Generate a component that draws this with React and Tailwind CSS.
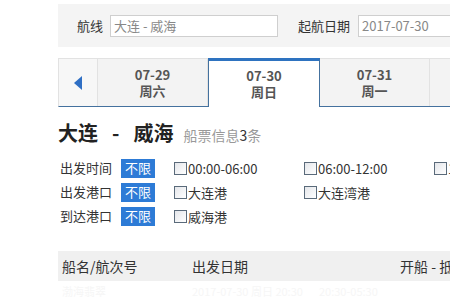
import React from "react";

const font = { fontFamily: '"Noto Sans CJK SC", "Liberation Sans", sans-serif' };

function Check({ label }) {
  return (
    <div className="flex items-center">
      <span className="w-[13px] h-[13px] border border-[#5a6a7a] bg-gradient-to-br from-[#e4e6ea] to-white"></span>
      <span className="ml-[1px] text-[13px] text-[#333] leading-none">{label}</span>
    </div>
  );
}

function FilterRow({ label, items }) {
  return (
    <div className="flex items-center h-[24px]">
      <span className="w-[63px] pl-[2px] text-[13px] text-[#333]">{label}</span>
      <span className="w-[34px] h-[19px] bg-[#2d7bd6] text-white text-[13px] flex items-center justify-center">不限</span>
      <div className="ml-[19px] flex">
        {items.map((it, i) => (
          <div key={i} className="w-[130px]">
            <Check label={it} />
          </div>
        ))}
      </div>
    </div>
  );
}

export default function App() {
  const tabs = [
    { d: "07-29", w: "周六" },
    { d: "07-30", w: "周日", active: true },
    { d: "07-31", w: "周一" },
  ];

  return (
    <div className="w-[450px] h-[300px] overflow-hidden bg-white" style={font}>
      <div className="w-[900px] pl-[58px] pt-[4px]">
        {/* search bar */}
        <div className="h-[43px] bg-[#f4f4f4] flex items-center pl-[19px]">
          <span className="text-[13px] text-[#333]">航线</span>
          <div className="ml-[7px] w-[168px] h-[22px] border border-[#cfcfcf] bg-white text-[13px] text-[#888] flex items-center px-[3px]">
            大连 - 威海
          </div>
          <span className="ml-[20px] text-[13px] text-[#333]">起航日期</span>
          <div className="ml-[8px] w-[168px] h-[22px] border border-[#cfcfcf] bg-white text-[13px] text-[#888] flex items-center px-[3px]">
            2017-07-30
          </div>
        </div>

        {/* date tabs */}
        <div className="mt-[11px] flex h-[49px] border-t border-l border-[#e2e2e2] border-b border-b-[#44719e]">
          <div className="w-[39px] bg-[#f7f7f7] border-r border-[#e2e2e2] flex items-center justify-center">
            <svg width="8" height="14" viewBox="0 0 8 14">
              <path d="M8 0 L0 7 L8 14 Z" fill="#2f6fc4" />
            </svg>
          </div>
          {tabs.map((t) =>
            t.active ? (
              <div
                key={t.d}
                className="w-[112px] -mt-px -mb-px bg-white border-t-[3px] border-t-[#2e73c0] border-x border-x-[#44719e] flex flex-col items-center justify-center text-[#555] font-bold text-[13px] leading-[16px]"
              >
                <span>{t.d}</span>
                <span>{t.w}</span>
              </div>
            ) : (
              <div
                key={t.d}
                className="w-[110px] bg-[#f3f3f3] border-r border-[#e2e2e2] flex flex-col items-center justify-center text-[#555] font-bold text-[13px] leading-[16px]"
              >
                <span>{t.d}</span>
                <span>{t.w}</span>
              </div>
            )
          )}
          <div className="w-[110px] bg-[#f3f3f3]"></div>
        </div>

        {/* title */}
        <div className="mt-[14px] flex items-end">
          <span className="text-[20px] font-bold text-[#222] leading-[24px]">大连</span>
          <span className="mx-[14px] text-[20px] font-bold text-[#222] leading-[24px]">-</span>
          <span className="text-[20px] font-bold text-[#222] leading-[24px]">威海</span>
          <span className="ml-[10px] text-[14px] text-[#999] leading-[20px]">
            船票信息<span className="text-[#333]">3</span>条
          </span>
        </div>

        {/* filters */}
        <div className="mt-[11px]">
          <FilterRow label="出发时间" items={["00:00-06:00", "06:00-12:00", "12:00-18:00"]} />
          <FilterRow label="出发港口" items={["大连港", "大连湾港"]} />
          <FilterRow label="到达港口" items={["威海港"]} />
        </div>

        {/* table header */}
        <div className="mt-[23px] h-[30px] bg-[#f0f0f0] flex items-center text-[14px] text-[#333]">
          <span className="pl-[4px] w-[134px]">船名/航次号</span>
          <span className="w-[208px]">出发日期</span>
          <span>开船 - 抵港时间</span>
        </div>
        <div className="h-[20px] flex items-center text-[11px] text-[#f6f6f6]">
          <span className="pl-[4px] w-[134px]">渤海翡翠</span>
          <span className="w-[127px]">2017-07-30 周日 20:30</span>
          <span>20:30-05:30</span>
        </div>
      </div>
    </div>
  );
}
